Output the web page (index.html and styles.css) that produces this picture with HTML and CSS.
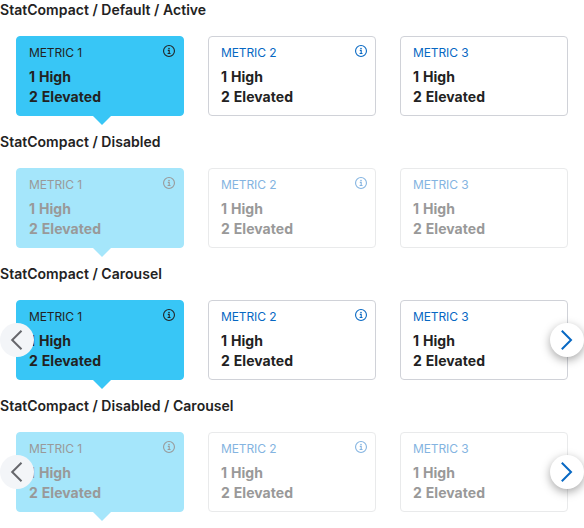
FILE: index.html
```
<!DOCTYPE html>
<html lang="en">
<head>
<meta charset="utf-8">
<title>StatCompact</title>
<link rel="stylesheet" href="styles.css">
</head>
<body>
<svg class="defs" width="0" height="0">
  <symbol id="info" viewBox="0 0 12 12">
    <circle cx="6" cy="6" r="5.45" fill="none" stroke="currentColor" stroke-width="1.1"/>
    <circle cx="6" cy="3.5" r=".8" fill="currentColor"/>
    <path d="M4.8 5.4H6.2V8.4M4.6 8.5H7.5" fill="none" stroke="currentColor" stroke-width="1.1"/>
  </symbol>
  <symbol id="left" viewBox="0 0 34 34">
    <path d="M21.5 7.8L12.2 17L21.5 26.2" fill="none" stroke="currentColor" stroke-width="2"/>
  </symbol>
  <symbol id="right" viewBox="0 0 34 34">
    <path d="M11.8 7.8L21 17L11.8 26.2" fill="none" stroke="currentColor" stroke-width="2"/>
  </symbol>
</svg>
<section>
  <h2>StatCompact / Default / Active</h2>
  <div class="row">
    <div class="card active"><div class="label">METRIC 1</div><svg class="info"><use href="#info"/></svg><div class="value">1 High<br>2 Elevated</div></div>
    <div class="card"><div class="label">METRIC 2</div><svg class="info"><use href="#info"/></svg><div class="value">1 High<br>2 Elevated</div></div>
    <div class="card"><div class="label">METRIC 3</div><div class="value">1 High<br>2 Elevated</div></div>
  </div>
</section>
<section>
  <h2>StatCompact / Disabled</h2>
  <div class="row disabled">
    <div class="card active"><div class="label">METRIC 1</div><svg class="info"><use href="#info"/></svg><div class="value">1 High<br>2 Elevated</div></div>
    <div class="card"><div class="label">METRIC 2</div><svg class="info"><use href="#info"/></svg><div class="value">1 High<br>2 Elevated</div></div>
    <div class="card"><div class="label">METRIC 3</div><div class="value">1 High<br>2 Elevated</div></div>
  </div>
</section>
<section>
  <h2>StatCompact / Carousel</h2>
  <div class="row">
    <div class="card active"><div class="label">METRIC 1</div><svg class="info"><use href="#info"/></svg><div class="value">1 High<br>2 Elevated</div></div>
    <div class="card"><div class="label">METRIC 2</div><svg class="info"><use href="#info"/></svg><div class="value">1 High<br>2 Elevated</div></div>
    <div class="card"><div class="label">METRIC 3</div><div class="value">1 High<br>2 Elevated</div></div>
    <button class="nav prev" aria-label="Previous" disabled><svg><use href="#left"/></svg></button>
    <button class="nav next" aria-label="Next"><svg><use href="#right"/></svg></button>
  </div>
</section>
<section>
  <h2>StatCompact / Disabled / Carousel</h2>
  <div class="row disabled">
    <div class="card active"><div class="label">METRIC 1</div><svg class="info"><use href="#info"/></svg><div class="value">1 High<br>2 Elevated</div></div>
    <div class="card"><div class="label">METRIC 2</div><svg class="info"><use href="#info"/></svg><div class="value">1 High<br>2 Elevated</div></div>
    <div class="card"><div class="label">METRIC 3</div><div class="value">1 High<br>2 Elevated</div></div>
    <button class="nav prev" aria-label="Previous" disabled><svg><use href="#left"/></svg></button>
    <button class="nav next" aria-label="Next"><svg><use href="#right"/></svg></button>
  </div>
</section>
</body>
</html>
```
FILE: styles.css
```
* { box-sizing: border-box; }
body {
  margin: 0;
  background: #fff;
  color: #222;
  font: 14px/20px Inter, "Liberation Sans", sans-serif;
}
.defs { position: absolute; }
h2 { margin: 0; font-size: 14px; line-height: 20px; font-weight: 600; letter-spacing: .03px; }
.row {
  position: relative;
  display: grid;
  grid-template-columns: repeat(3, 168px);
  gap: 24px;
  padding: 16px;
}
.card {
  position: relative;
  height: 80px;
  padding: 8px 12px;
  border: 1px solid #d0d2d8;
  border-radius: 4px;
  background: #fff;
}
.label { font-size: 12px; line-height: 16px; font-weight: 400; letter-spacing: -.1px; color: #0768c3; }
.value { margin-top: 6px; font-weight: 700; letter-spacing: .04px; word-spacing: .6px; }
.info {
  position: absolute;
  top: 8px;
  right: 8px;
  width: 12px;
  height: 12px;
  color: #0768c3;
}
.active { background: #38c6f6; border-color: #38c6f6; }
.active .label, .active .info { color: #222; }
.active::after {
  content: "";
  position: absolute;
  left: 76px;
  top: 79px;
  border: 9px solid transparent;
  border-bottom: 0;
  border-top-color: #38c6f6;
}
.disabled .card { border-color: #e9eaeb; }
.disabled .label, .disabled .info { color: #84b4e1; }
.disabled .value, .disabled .active .label, .disabled .active .info { color: #999; }
.disabled .active { background: #a5e6fb; border-color: #a5e6fb; }
.disabled .active::after { border-top-color: #a5e6fb; }
.nav {
  position: absolute;
  top: 39px;
  width: 34px;
  height: 34px;
  padding: 0;
  border: 0;
  border-radius: 50%;
}
.nav svg { display: block; width: 34px; height: 34px; }
.prev { left: 0; background: #f3f5f8; color: #66676c; }
.next { right: 0; background: #fff; color: #0768c3; box-shadow: 0 3px 10px rgba(0, 0, 0, .35); }
```
